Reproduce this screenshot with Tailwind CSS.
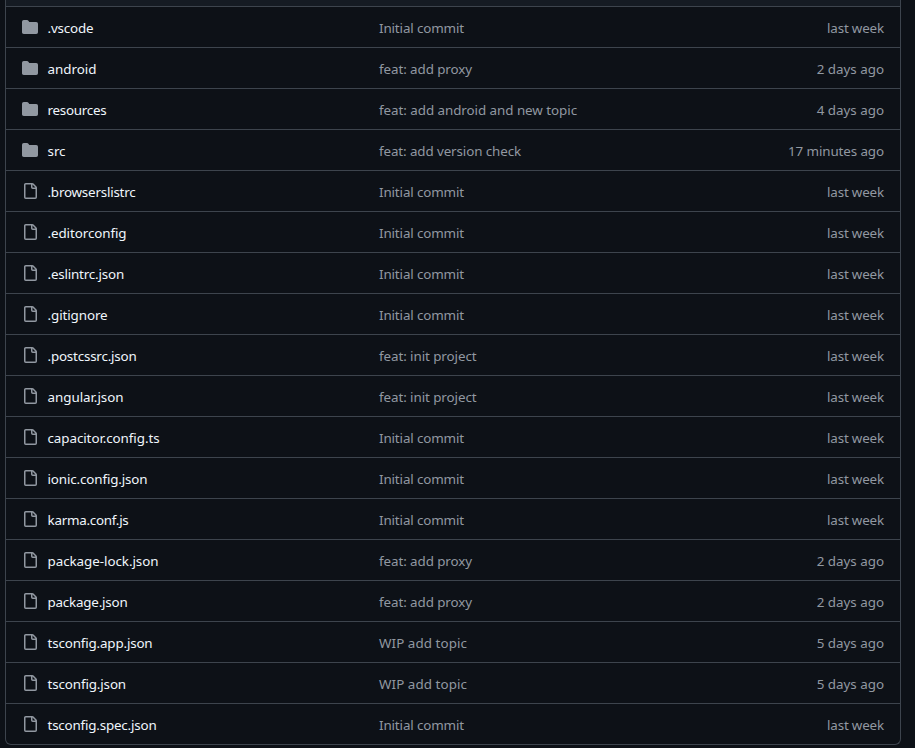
<!DOCTYPE html>
<html lang="en">
<head>
<meta charset="utf-8">
<title>Repository files</title>
<script src="https://cdn.jsdelivr.net/npm/@tailwindcss/browser@4"></script>
</head>
<body class="h-[748px] overflow-hidden bg-[#0d1117] font-['Noto_Sans','Open_Sans',sans-serif] text-[13.4px] leading-5">
<svg class="hidden">
  <symbol id="dir" viewBox="0 0 16 16"><path d="M1.75 1A1.75 1.75 0 0 0 0 2.75v10.5C0 14.216.784 15 1.75 15h12.5A1.75 1.75 0 0 0 16 13.25v-8.5A1.75 1.75 0 0 0 14.25 3H7.5a.25.25 0 0 1-.2-.1l-.9-1.2C6.07 1.26 5.55 1 5 1H1.75Z"/></symbol>
  <symbol id="file" viewBox="0 0 16 16"><path d="M2 1.75C2 .784 2.784 0 3.75 0h6.586c.464 0 .909.184 1.237.513l2.914 2.914c.329.328.513.773.513 1.237v9.586A1.75 1.75 0 0 1 13.25 16h-9.5A1.75 1.75 0 0 1 2 14.25Zm1.75-.25a.25.25 0 0 0-.25.25v12.5c0 .138.112.25.25.25h9.5a.25.25 0 0 0 .25-.25V6h-2.75A1.75 1.75 0 0 1 9 4.25V1.5Zm6.75.062V4.25c0 .138.112.25.25.25h2.688l-.011-.013-2.914-2.914-.013-.011Z"/></symbol>
</svg>
<main class="ml-[5px] w-[896px] overflow-hidden rounded-b-md border border-t-0 border-[#3d444d]">
  <div class="h-1.5 bg-[#151b23]"></div>
  <div id="rows"></div>
</main>
<template id="row">
  <div class="flex h-[41px] items-center border-t border-[#3d444d] pr-4 pl-4">
    <svg class="mr-[9.5px] size-4 shrink-0 fill-[#9198a1]"><use/></svg>
    <div class="w-[331.5px] shrink-0 pt-0.5 whitespace-nowrap text-[#f0f6fc]"><span></span></div>
    <div class="grow pt-0.5 whitespace-nowrap text-[#9198a1]"><span></span></div>
    <div class="pt-0.5 whitespace-nowrap text-[#9198a1]"><span></span></div>
  </div>
</template>
<script>
const init = ['Initial commit', 85], proxy = ['feat: add proxy', 93], proj = ['feat: init project', 97.5], wip = ['WIP add topic', 88];
const week = ['last week', 57], d2 = ['2 days ago', 67.3], d4 = ['4 days ago', 67.3], d5 = ['5 days ago', 67.3];
// kind, [label, width in px], commit message, age
const rows = [
  ['dir', ['.vscode', 46], init, week],
  ['dir', ['android', 49], proxy, d2],
  ['dir', ['resources', 59], ['feat: add android and new topic', 198], d4],
  ['dir', ['src', 18], ['feat: add version check', 142], ['17 minutes ago', 96]],
  ['file', ['.browserslistrc', 88], init, week],
  ['file', ['.editorconfig', 79], init, week],
  ['file', ['.eslintrc.json', 76.5], init, week],
  ['file', ['.gitignore', 60], init, week],
  ['file', ['.postcssrc.json', 89], proj, week],
  ['file', ['angular.json', 76], proj, week],
  ['file', ['capacitor.config.ts', 112], init, week],
  ['file', ['ionic.config.json', 100], init, week],
  ['file', ['karma.conf.js', 81], init, week],
  ['file', ['package-lock.json', 111], proxy, d2],
  ['file', ['package.json', 80], proxy, d2],
  ['file', ['tsconfig.app.json', 105], wip, d5],
  ['file', ['tsconfig.json', 78.5], wip, d5],
  ['file', ['tsconfig.spec.json', 109], init, week],
];
for (const [kind, ...cells] of rows) {
  const node = document.getElementById('row').content.cloneNode(true);
  node.querySelector('use').setAttribute('href', '#' + kind);
  node.querySelectorAll('span').forEach((s, i) => {
    s.textContent = cells[i][0];
    s.dataset.width = cells[i][1];
  });
  document.getElementById('rows').append(node);
}
// Spread each label to its width. Letter spacing turns ligatures off, so it is set before measuring.
function fit() {
  document.querySelectorAll('#rows span').forEach(s => {
    s.style.letterSpacing = '0.01px';
    const gap = (s.dataset.width - s.getBoundingClientRect().width) / s.textContent.length;
    s.style.letterSpacing = gap + 0.01 + 'px';
  });
}
window.addEventListener('load', fit);
</script>
</body>
</html>
